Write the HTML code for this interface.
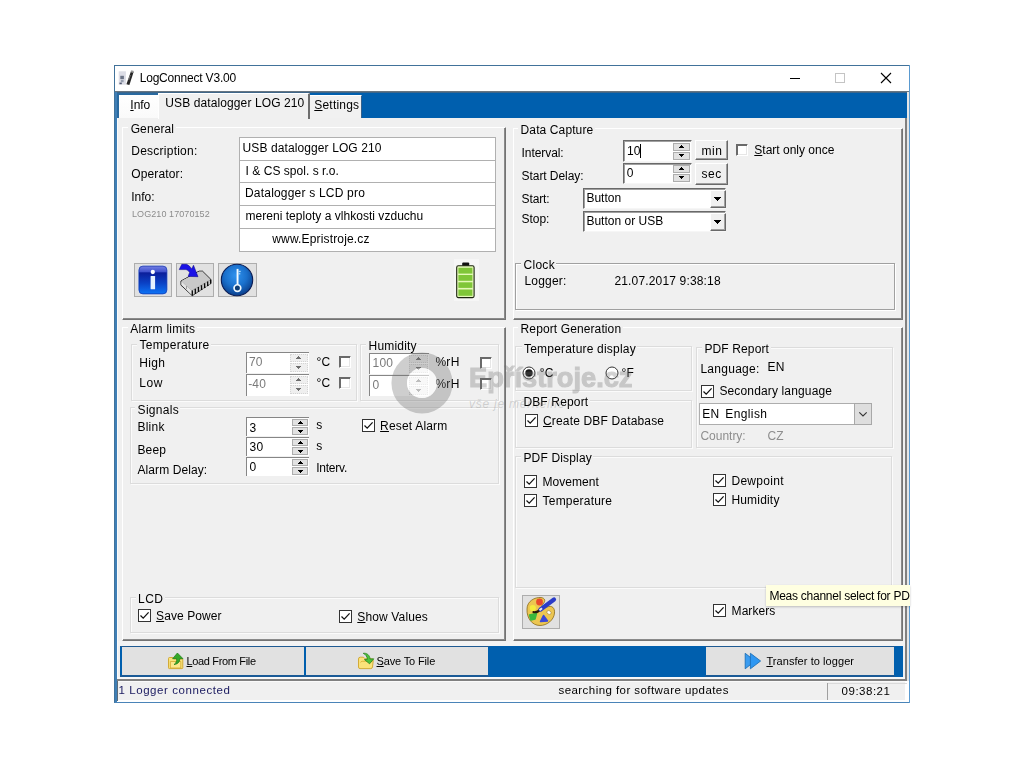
<!DOCTYPE html>
<html><head><meta charset="utf-8">
<style>
*{box-sizing:border-box;margin:0;padding:0}
html,body{width:1024px;height:768px;background:#fff;overflow:hidden}
body{font-family:"Liberation Sans",sans-serif;font-size:12px;color:#000;position:relative}
.a{position:absolute}
.t{position:absolute;white-space:nowrap;line-height:14px}
.panel{position:absolute;background:#f0f0f0;border-top:1px solid #fff;border-left:1px solid #fff;border-right:1px solid #737373;border-bottom:1px solid #737373;box-shadow:inset -1px -1px 0 #8a8a8a}
.gl{position:absolute;background:#f0f0f0;white-space:nowrap;line-height:14px;letter-spacing:0.15px}
.ed{position:absolute;background:#fff;border:1px solid #b0b0b0}
.sunk{position:absolute;background:#fff;border-top:1px solid #696969;border-left:1px solid #696969;border-right:1px solid #f6f6f6;border-bottom:1px solid #f6f6f6;box-shadow:inset 1px 1px 0 #a0a0a0}
.btn{position:absolute;background:#e1e1e1;border:1px solid #adadad}
.rbtn{position:absolute;background:#f0f0f0;border-top:1px solid #fff;border-left:1px solid #fff;border-right:1px solid #696969;border-bottom:1px solid #696969;box-shadow:inset -1px -1px 0 #a0a0a0}
.cb{position:absolute;width:13px;height:13px;background:#fff;border:1px solid #333}
.cbo{position:absolute;width:12px;height:12px;background:#fff;border-top:1px solid #696969;border-left:1px solid #696969;border-right:1px solid #fff;border-bottom:1px solid #fff;box-shadow:inset 1px 1px 0 #6a6a6a, inset -1px -1px 0 #e6e6e6}
u{text-decoration:underline;text-underline-offset:1px}
#root{position:absolute;left:0;top:0;width:1024px;height:768px}
.t{filter:grayscale(1)}
</style></head><body><div id="root">
<div class="a" style="left:114px;top:65px;width:796px;height:638px;border:1px solid #4a84b8;border-top-color:#41729a;border-left-color:#41729a;background:#fff"></div>
<div class="t" style="left:139.7px;top:71.04px;font-size:12px;line-height:14px;letter-spacing:-0.195px;">LogConnect V3.00</div>
<svg class="a" style="left:116px;top:68px" width="20" height="20" viewBox="116 68 20 20"><rect x="118.700" y="71.300" width="7.200" height="13.400" fill="#dcdde6"/><rect x="120.300" y="75.800" width="3.600" height="3.300" fill="#6c7486"/><rect x="120.800" y="79.800" width="2.800" height="2.400" fill="#98a0b0"/><rect x="119.500" y="82.600" width="2.300" height="1.600" fill="#505870"/><path d="M131 71.300 L133.600 72 L129.400 85 L126.400 84.200 Z" fill="#262626"/><path d="M131.300 70.300 L133.900 71 L133.300 73 L130.700 72.300 Z" fill="#9a9a9a"/><path d="M130.300 75 L128.700 80" stroke="#8a8a8a" stroke-width="0.800"/></svg>
<svg class="a" style="left:780px;top:66px" width="128" height="25" viewBox="0 0 128 25"><path d="M10 12.5 H20" stroke="#000" stroke-width="1"/><rect x="55.5" y="7.5" width="9" height="9" fill="none" stroke="#c4c4c4" stroke-width="1"/><path d="M101 7 L111 17 M111 7 L101 17" stroke="#000" stroke-width="1.1"/></svg>
<div class="a" style="left:115px;top:91px;width:794px;height:2px;background:linear-gradient(#7c7c7c,#2a5f8e)"></div>
<div class="a" style="left:115px;top:93px;width:792px;height:25px;background:#005fae"></div>
<div class="a" style="left:115px;top:93px;width:45px;height:25px;background:#2a6aa0"></div>
<div class="a" style="left:117px;top:117.5px;width:790px;height:1.0px;background:#fff"></div>
<div class="a" style="left:907px;top:92px;width:2px;height:589px;background:#e6e6e6"></div>
<div class="a" style="left:117px;top:118px;width:789px;height:562px;background:#f0f0f0"></div>
<div class="a" style="left:115px;top:92px;width:1.5px;height:610px;background:#3f7fb6"></div>
<div class="a" style="left:116.5px;top:118px;width:1.5px;height:561px;background:#fafafa"></div>
<div class="a" style="left:905px;top:118px;width:2px;height:563px;background:#808080"></div>
<div class="a" style="left:117px;top:679px;width:790px;height:2px;background:#808080"></div>
<div class="a" style="left:117px;top:677px;width:788px;height:2px;background:#f8f8f8"></div>
<div class="a" style="left:119px;top:95px;width:39px;height:23px;background:linear-gradient(#fff,#fafafa)"></div>
<div class="a" style="left:158px;top:93px;width:152px;height:26px;background:#f0f0f0;border-right:2px solid #6d6d6d;border-top:1px solid #fff;border-left:1px solid #fff"></div>
<div class="a" style="left:310px;top:95px;width:52px;height:23px;background:#f1f1f1;border-right:1px solid #35618c;border-top:1px solid #fff"></div>
<div class="t" style="left:130.3px;top:98.24px;font-size:12px;line-height:14px;letter-spacing:-0.008px;"><u>I</u>nfo</div>
<div class="t" style="left:165.3px;top:96.24px;font-size:12px;line-height:14px;letter-spacing:0.106px;">USB datalogger LOG 210</div>
<div class="t" style="left:314.3px;top:98.04px;font-size:12px;line-height:14px;letter-spacing:0.191px;"><u>S</u>ettings</div>
<div class="panel" style="left:122px;top:127px;width:384px;height:193px;"></div>
<div class="panel" style="left:513px;top:128px;width:390px;height:192px;"></div>
<div class="panel" style="left:122px;top:327px;width:384px;height:314px;"></div>
<div class="panel" style="left:513px;top:327px;width:390px;height:314px;"></div>
<div class="a" style="left:128.2px;top:122.69999999999999px;width:47.4px;height:12px;background:#f0f0f0"></div>
<div class="t" style="left:130.7px;top:121.54px;font-size:12px;line-height:14px;letter-spacing:0.100px;">General</div>
<div class="t" style="left:131.3px;top:144.04px;font-size:12px;line-height:14px;letter-spacing:0.237px;">Description:</div>
<div class="t" style="left:131.3px;top:166.84px;font-size:12px;line-height:14px;letter-spacing:0.122px;">Operator:</div>
<div class="t" style="left:131.3px;top:189.54px;font-size:12px;line-height:14px;letter-spacing:-0.012px;">Info:</div>
<div class="t" style="left:132px;top:206.58px;font-size:9px;line-height:14px;color:#8c8c8c;letter-spacing:0.081px;">LOG210 17070152</div>
<div class="ed" style="left:239px;top:137px;width:257px;height:24px;"></div>
<div class="ed" style="left:239px;top:160px;width:257px;height:23px;"></div>
<div class="ed" style="left:239px;top:182px;width:257px;height:24px;"></div>
<div class="ed" style="left:239px;top:205px;width:257px;height:24px;"></div>
<div class="ed" style="left:239px;top:228px;width:257px;height:24px;"></div>
<div class="t" style="left:242.5px;top:141.24px;font-size:12px;line-height:14px;letter-spacing:0.106px;">USB datalogger LOG 210</div>
<div class="t" style="left:245.6px;top:163.84px;font-size:12px;line-height:14px;letter-spacing:0.031px;">I &amp; CS spol. s r.o.</div>
<div class="t" style="left:245px;top:186.24px;font-size:12px;line-height:14px;letter-spacing:0.197px;">Datalogger s LCD pro</div>
<div class="t" style="left:245.5px;top:208.84px;font-size:12px;line-height:14px;letter-spacing:0.031px;">mereni teploty a vlhkosti vzduchu</div>
<div class="t" style="left:272.3px;top:232.24px;font-size:12px;line-height:14px;letter-spacing:0.154px;">www.Epristroje.cz</div>
<div class="btn" style="left:134px;top:263px;width:38px;height:34px;"></div>
<div class="btn" style="left:176px;top:263px;width:38px;height:34px;"></div>
<div class="btn" style="left:218px;top:263px;width:39px;height:34px;"></div>
<svg class="a" style="left:137px;top:264px" width="32" height="32" viewBox="137 264 32 32">
<defs><linearGradient id="gi" x1="0" y1="0" x2="0" y2="1"><stop offset="0" stop-color="#7480e4"/><stop offset="0.210" stop-color="#3e50cc"/><stop offset="0.240" stop-color="#0b1e9a"/><stop offset="0.600" stop-color="#0a40c4"/><stop offset="1" stop-color="#0d74f6"/></linearGradient></defs>
<rect x="138.200" y="265.400" width="29.400" height="29.200" rx="4.600" fill="#cfe0ff"/>
<rect x="138.900" y="266.100" width="28" height="27.800" rx="4" fill="url(#gi)" stroke="#1432a4" stroke-width="0.700"/>
<circle cx="152.800" cy="272" r="2.150" fill="#fff"/><rect x="150.600" y="275.900" width="4.500" height="13.300" rx="0.500" fill="#e6f2ff"/></svg>
<svg class="a" style="left:174px;top:260px" width="42" height="40" viewBox="0 0 42 40">
<path d="M7 21 L25 11.200 L28.500 11.200 L36.800 19.400 L36.800 23.600 L18.300 35.600 L7 25.200 Z" fill="#9a9a9a" stroke="#111" stroke-width="1"/>
<path d="M7.300 20.900 L25 11.400 L28.400 11.400 L36.400 19.400 L17.800 30.600 Z" fill="#c9c9c9"/>
<path d="M7.300 21.200 L17.800 30.800 L17.800 35 L7.300 25 Z" fill="#e4e4e4"/>
<path d="M12.500 26 L12.500 29" stroke="#888" stroke-width="0.800"/>
<path d="M18.300 30.500 V35.600 M21.300 28.800 V33.800 M24.400 27 V31.800 M27.500 25.200 V30 M30.600 23.300 V28 M33.700 21.500 V26 M36.600 19.800 V23.600" stroke="#0a0a0a" stroke-width="1.300"/>
<path d="M19.800 30 V34.500 M22.900 28.200 V32.600 M26 26.300 V30.800 M29.100 24.500 V29 M32.200 22.600 V27 M35.200 20.800 V24.800" stroke="#e8e8e8" stroke-width="1"/>
<path d="M5.200 9.600 L7.800 4.300 L12.500 4.300 C14.500 5 16.500 7 17.700 8.900 L19.500 5.200 L24 16.700 L14.100 16.400 L15.600 12.500 C14.500 10.800 13.500 10 12 9.600 Z" fill="#1a12e6" stroke="#080480" stroke-width="0.500" stroke-linejoin="round"/>
</svg>
<svg class="a" style="left:219px;top:262px" width="36" height="36" viewBox="219 262 36 36">
<defs><radialGradient id="gk" cx="0.460" cy="0.360" r="0.640"><stop offset="0" stop-color="#2f92ee"/><stop offset="0.550" stop-color="#1a70cc"/><stop offset="1" stop-color="#0b3f8c"/></radialGradient></defs>
<circle cx="237" cy="280" r="15.700" fill="url(#gk)" stroke="#0a1c54" stroke-width="1.100"/>
<rect x="236.600" y="268.900" width="1.900" height="16" fill="#f4fbff"/>
<rect x="238.400" y="270.800" width="2.300" height="1.300" fill="#a8d6fa"/>
<rect x="238.400" y="273.200" width="1.900" height="1.200" fill="#a8d6fa"/>
<circle cx="237.400" cy="288.100" r="3.350" fill="#0d3c74" stroke="#f0f9ff" stroke-width="1.700"/>
</svg>
<svg class="a" style="left:454px;top:259px" width="25" height="42" viewBox="0 0 25 42">
<rect x="0" y="0" width="25" height="42" fill="#f6f6f6"/>
<rect x="8.2" y="3.6" width="7" height="3.6" rx="1" fill="#111"/>
<rect x="2.700" y="6.800" width="17.400" height="31.800" rx="1.600" fill="#e4f9b8" stroke="#1c2410" stroke-width="1.100"/>
<rect x="4.400" y="8.800" width="14" height="5.800" fill="#7fc638"/>
<rect x="4.400" y="16" width="14" height="5.800" fill="#7fc638"/>
<rect x="4.400" y="23.300" width="14" height="5.600" fill="#7fc638"/>
<rect x="4.400" y="30.500" width="14" height="6.300" fill="#7fc638"/>
</svg>
<div class="a" style="left:518.1px;top:124.6px;width:76.7px;height:12px;background:#f0f0f0"></div>
<div class="t" style="left:520.6px;top:123.44px;font-size:12px;line-height:14px;letter-spacing:0.110px;">Data Capture</div>
<div class="t" style="left:521.6px;top:146.24px;font-size:12px;line-height:14px;letter-spacing:-0.076px;">Interval:</div>
<div class="t" style="left:521.6px;top:169.24px;font-size:12px;line-height:14px;letter-spacing:-0.067px;">Start Delay:</div>
<div class="t" style="left:521.6px;top:192.04px;font-size:12px;line-height:14px;letter-spacing:-0.148px;">Start:</div>
<div class="t" style="left:521.6px;top:211.84px;font-size:12px;line-height:14px;letter-spacing:-0.046px;">Stop:</div>
<div class="sunk" style="left:623px;top:140px;width:69px;height:22px;"></div>
<div class="t" style="left:627px;top:143.84px;font-size:12px;line-height:14px;color:#000;letter-spacing:0.15px;">10</div>
<div class="a" style="left:673px;top:142.5px;width:17px;height:8.0px;background:#e1e1e1;border:1px solid #adadad"></div>
<div class="a" style="left:681px;top:145px;width:1px;height:1px;background:#000"></div>
<div class="a" style="left:680px;top:146px;width:3px;height:1px;background:#000"></div>
<div class="a" style="left:679px;top:147px;width:5px;height:1px;background:#000"></div>
<div class="a" style="left:673px;top:152px;width:17px;height:8px;background:#e1e1e1;border:1px solid #adadad"></div>
<div class="a" style="left:679px;top:154px;width:5px;height:1px;background:#000"></div>
<div class="a" style="left:680px;top:155px;width:3px;height:1px;background:#000"></div>
<div class="a" style="left:681px;top:156px;width:1px;height:1px;background:#000"></div>
<div class="a" style="left:640px;top:143.5px;width:1px;height:14.0px;background:#000"></div>
<div class="sunk" style="left:623px;top:163px;width:69px;height:21px;"></div>
<div class="t" style="left:626.8px;top:166.04px;font-size:12px;line-height:14px;color:#000;letter-spacing:0.15px;">0</div>
<div class="a" style="left:673px;top:165px;width:17px;height:7.5px;background:#e1e1e1;border:1px solid #adadad"></div>
<div class="a" style="left:681px;top:167px;width:1px;height:1px;background:#000"></div>
<div class="a" style="left:680px;top:168px;width:3px;height:1px;background:#000"></div>
<div class="a" style="left:679px;top:169px;width:5px;height:1px;background:#000"></div>
<div class="a" style="left:673px;top:174px;width:17px;height:8px;background:#e1e1e1;border:1px solid #adadad"></div>
<div class="a" style="left:679px;top:176px;width:5px;height:1px;background:#000"></div>
<div class="a" style="left:680px;top:177px;width:3px;height:1px;background:#000"></div>
<div class="a" style="left:681px;top:178px;width:1px;height:1px;background:#000"></div>
<div class="rbtn" style="left:695px;top:140px;width:33px;height:20px;"></div>
<div class="rbtn" style="left:695px;top:163px;width:33px;height:22px;"></div>
<div class="t" style="left:701.6px;top:143.54px;font-size:12px;line-height:14px;letter-spacing:0.519px;">min</div>
<div class="t" style="left:701.4px;top:166.54px;font-size:12px;line-height:14px;letter-spacing:0.604px;">sec</div>
<div class="cbo" style="left:736px;top:143.5px"></div>
<div class="t" style="left:754.3px;top:143.04px;font-size:12px;line-height:14px;letter-spacing:0.002px;"><u>S</u>tart only once</div>
<div class="sunk" style="left:583px;top:187.5px;width:143px;height:21.5px;"></div>
<div class="t" style="left:586.4px;top:191.04px;font-size:12px;line-height:14px;letter-spacing:0.016px;">Button</div>
<div class="rbtn" style="left:709.5px;top:189.5px;width:16.5px;height:18.0px;"></div>
<div class="a" style="left:714px;top:197px;width:7px;height:1px;background:#000"></div>
<div class="a" style="left:715px;top:198px;width:5px;height:1px;background:#000"></div>
<div class="a" style="left:716px;top:199px;width:3px;height:1px;background:#000"></div>
<div class="a" style="left:717px;top:200px;width:1px;height:1px;background:#000"></div>
<div class="sunk" style="left:583px;top:210.5px;width:143px;height:21.5px;"></div>
<div class="t" style="left:586.4px;top:213.84px;font-size:12px;line-height:14px;letter-spacing:0.006px;">Button or USB</div>
<div class="rbtn" style="left:709.5px;top:212.5px;width:16.5px;height:18.0px;"></div>
<div class="a" style="left:714px;top:220px;width:7px;height:1px;background:#000"></div>
<div class="a" style="left:715px;top:221px;width:5px;height:1px;background:#000"></div>
<div class="a" style="left:716px;top:222px;width:3px;height:1px;background:#000"></div>
<div class="a" style="left:717px;top:223px;width:1px;height:1px;background:#000"></div>
<div class="a" style="left:515px;top:263px;width:380px;height:47px;border:1px solid #a0a0a0;box-shadow:1px 1px 0 #fff, inset 1px 1px 0 #fff"></div>
<div class="a" style="left:521.1px;top:258.9px;width:35.3px;height:12px;background:#f0f0f0"></div>
<div class="t" style="left:523.6px;top:257.74px;font-size:12px;line-height:14px;letter-spacing:0.257px;">Clock</div>
<div class="t" style="left:524.5px;top:273.74px;font-size:12px;line-height:14px;letter-spacing:0.185px;">Logger:</div>
<div class="t" style="left:614.4px;top:273.74px;font-size:12px;line-height:14px;letter-spacing:0.165px;">21.07.2017 9:38:18</div>
<div class="a" style="left:127.69999999999999px;top:322.7px;width:69.1px;height:12px;background:#f0f0f0"></div>
<div class="t" style="left:130.2px;top:321.54px;font-size:12px;line-height:14px;letter-spacing:0.258px;">Alarm limits</div>
<div class="a" style="left:130.5px;top:343.5px;width:226.0px;height:57.0px;border:1px solid #dcdcdc;box-shadow:1px 1px 0 #fbfbfb, inset 1px 1px 0 #fbfbfb"></div>
<div class="a" style="left:137.0px;top:338.7px;width:73.9px;height:12px;background:#f0f0f0"></div>
<div class="t" style="left:139.5px;top:337.54px;font-size:12px;line-height:14px;letter-spacing:0.230px;">Temperature</div>
<div class="a" style="left:360px;top:343.5px;width:139px;height:57.5px;border:1px solid #dcdcdc;box-shadow:1px 1px 0 #fbfbfb, inset 1px 1px 0 #fbfbfb"></div>
<div class="a" style="left:366.1px;top:339.9px;width:52.1px;height:12px;background:#f0f0f0"></div>
<div class="t" style="left:368.6px;top:338.74px;font-size:12px;line-height:14px;letter-spacing:0.177px;">Humidity</div>
<div class="t" style="left:139.3px;top:355.74px;font-size:12px;line-height:14px;letter-spacing:0.328px;">High</div>
<div class="t" style="left:139.3px;top:375.64px;font-size:12px;line-height:14px;letter-spacing:0.495px;">Low</div>
<div class="a" style="left:246px;top:352px;width:63px;height:21px;background:#fff;border-top:1px solid #868686;border-left:1px solid #868686"></div>
<div class="t" style="left:249px;top:355.14px;font-size:12px;line-height:14px;color:#7a7a7a;letter-spacing:0.15px;">70</div>
<div class="a" style="left:290px;top:353.5px;width:18px;height:8.5px;background:#efefef;border:1px solid #d4d4d4;border-style:dotted"></div>
<div class="a" style="left:298px;top:356px;width:1px;height:1px;background:#6d6d6d"></div>
<div class="a" style="left:297px;top:357px;width:3px;height:1px;background:#6d6d6d"></div>
<div class="a" style="left:296px;top:358px;width:5px;height:1px;background:#6d6d6d"></div>
<div class="a" style="left:290px;top:363px;width:18px;height:9px;background:#efefef;border:1px solid #d4d4d4;border-style:dotted"></div>
<div class="a" style="left:296px;top:366px;width:5px;height:1px;background:#6d6d6d"></div>
<div class="a" style="left:297px;top:367px;width:3px;height:1px;background:#6d6d6d"></div>
<div class="a" style="left:298px;top:368px;width:1px;height:1px;background:#6d6d6d"></div>
<div class="a" style="left:246px;top:374px;width:63px;height:21.5px;background:#fff;border-top:1px solid #868686;border-left:1px solid #868686"></div>
<div class="t" style="left:248.2px;top:376.64px;font-size:12px;line-height:14px;color:#7a7a7a;letter-spacing:0.15px;">-40</div>
<div class="a" style="left:290px;top:375.5px;width:18px;height:8.5px;background:#efefef;border:1px solid #d4d4d4;border-style:dotted"></div>
<div class="a" style="left:298px;top:378px;width:1px;height:1px;background:#6d6d6d"></div>
<div class="a" style="left:297px;top:379px;width:3px;height:1px;background:#6d6d6d"></div>
<div class="a" style="left:296px;top:380px;width:5px;height:1px;background:#6d6d6d"></div>
<div class="a" style="left:290px;top:385px;width:18px;height:9px;background:#efefef;border:1px solid #d4d4d4;border-style:dotted"></div>
<div class="a" style="left:296px;top:388px;width:5px;height:1px;background:#6d6d6d"></div>
<div class="a" style="left:297px;top:389px;width:3px;height:1px;background:#6d6d6d"></div>
<div class="a" style="left:298px;top:390px;width:1px;height:1px;background:#6d6d6d"></div>
<div class="t" style="left:316.6px;top:355.34px;font-size:12px;line-height:14px;letter-spacing:0.15px;">°C</div>
<div class="t" style="left:316.6px;top:375.64px;font-size:12px;line-height:14px;letter-spacing:0.15px;">°C</div>
<div class="cbo" style="left:339.4px;top:356px"></div>
<div class="cbo" style="left:339.4px;top:377px"></div>
<div class="a" style="left:369px;top:353px;width:59.5px;height:20.5px;background:#fff;border-top:1px solid #868686;border-left:1px solid #868686"></div>
<div class="t" style="left:372.6px;top:355.74px;font-size:12px;line-height:14px;color:#7a7a7a;letter-spacing:0.15px;">100</div>
<div class="a" style="left:409px;top:354.5px;width:18.5px;height:8.5px;background:#efefef;border:1px solid #d4d4d4;border-style:dotted"></div>
<div class="a" style="left:418px;top:357px;width:1px;height:1px;background:#6d6d6d"></div>
<div class="a" style="left:417px;top:358px;width:3px;height:1px;background:#6d6d6d"></div>
<div class="a" style="left:416px;top:359px;width:5px;height:1px;background:#6d6d6d"></div>
<div class="a" style="left:409px;top:364px;width:18.5px;height:8.5px;background:#efefef;border:1px solid #d4d4d4;border-style:dotted"></div>
<div class="a" style="left:416px;top:367px;width:5px;height:1px;background:#6d6d6d"></div>
<div class="a" style="left:417px;top:368px;width:3px;height:1px;background:#6d6d6d"></div>
<div class="a" style="left:418px;top:369px;width:1px;height:1px;background:#6d6d6d"></div>
<div class="a" style="left:369px;top:375px;width:59.5px;height:20.5px;background:#fff;border-top:1px solid #868686;border-left:1px solid #868686"></div>
<div class="t" style="left:372.6px;top:377.84px;font-size:12px;line-height:14px;color:#7a7a7a;letter-spacing:0.15px;">0</div>
<div class="a" style="left:409px;top:376.5px;width:18.5px;height:8.5px;background:#efefef;border:1px solid #d4d4d4;border-style:dotted"></div>
<div class="a" style="left:418px;top:379px;width:1px;height:1px;background:#6d6d6d"></div>
<div class="a" style="left:417px;top:380px;width:3px;height:1px;background:#6d6d6d"></div>
<div class="a" style="left:416px;top:381px;width:5px;height:1px;background:#6d6d6d"></div>
<div class="a" style="left:409px;top:386px;width:18.5px;height:8.5px;background:#efefef;border:1px solid #d4d4d4;border-style:dotted"></div>
<div class="a" style="left:416px;top:389px;width:5px;height:1px;background:#6d6d6d"></div>
<div class="a" style="left:417px;top:390px;width:3px;height:1px;background:#6d6d6d"></div>
<div class="a" style="left:418px;top:391px;width:1px;height:1px;background:#6d6d6d"></div>
<div class="t" style="left:435.4px;top:354.84px;font-size:12px;line-height:14px;letter-spacing:0.285px;">%rH</div>
<div class="t" style="left:435.4px;top:377.44px;font-size:12px;line-height:14px;letter-spacing:0.285px;">%rH</div>
<div class="cbo" style="left:480.4px;top:357px"></div>
<div class="cbo" style="left:480.4px;top:378.2px"></div>
<div class="a" style="left:129.8px;top:407px;width:369.2px;height:77px;border:1px solid #dcdcdc;box-shadow:1px 1px 0 #fbfbfb, inset 1px 1px 0 #fbfbfb"></div>
<div class="a" style="left:135.1px;top:403.75px;width:45.4px;height:12px;background:#f0f0f0"></div>
<div class="t" style="left:137.6px;top:402.59px;font-size:12px;line-height:14px;letter-spacing:0.292px;">Signals</div>
<div class="t" style="left:137.4px;top:419.54px;font-size:12px;line-height:14px;letter-spacing:0.277px;">Blink</div>
<div class="t" style="left:137.4px;top:442.64px;font-size:12px;line-height:14px;letter-spacing:0.167px;">Beep</div>
<div class="t" style="left:137.4px;top:463.34px;font-size:12px;line-height:14px;letter-spacing:0.101px;">Alarm Delay:</div>
<div class="a" style="left:246px;top:417px;width:63px;height:19px;background:#fff;border-top:1px solid #868686;border-left:1px solid #868686"></div>
<div class="t" style="left:249.6px;top:420.54px;font-size:12px;line-height:14px;color:#000;letter-spacing:0.15px;">3</div>
<div class="a" style="left:292px;top:418.5px;width:16px;height:7.5px;background:#e1e1e1;border:1px solid #adadad"></div>
<div class="a" style="left:300px;top:421px;width:1px;height:1px;background:#000"></div>
<div class="a" style="left:299px;top:422px;width:3px;height:1px;background:#000"></div>
<div class="a" style="left:298px;top:423px;width:5px;height:1px;background:#000"></div>
<div class="a" style="left:292px;top:427px;width:16px;height:8px;background:#e1e1e1;border:1px solid #adadad"></div>
<div class="a" style="left:298px;top:430px;width:5px;height:1px;background:#000"></div>
<div class="a" style="left:299px;top:431px;width:3px;height:1px;background:#000"></div>
<div class="a" style="left:300px;top:432px;width:1px;height:1px;background:#000"></div>
<div class="a" style="left:246px;top:437px;width:63px;height:19px;background:#fff;border-top:1px solid #868686;border-left:1px solid #868686"></div>
<div class="t" style="left:249.6px;top:440.44px;font-size:12px;line-height:14px;color:#000;letter-spacing:0.15px;">30</div>
<div class="a" style="left:292px;top:438.5px;width:16px;height:7.5px;background:#e1e1e1;border:1px solid #adadad"></div>
<div class="a" style="left:300px;top:441px;width:1px;height:1px;background:#000"></div>
<div class="a" style="left:299px;top:442px;width:3px;height:1px;background:#000"></div>
<div class="a" style="left:298px;top:443px;width:5px;height:1px;background:#000"></div>
<div class="a" style="left:292px;top:447px;width:16px;height:8px;background:#e1e1e1;border:1px solid #adadad"></div>
<div class="a" style="left:298px;top:450px;width:5px;height:1px;background:#000"></div>
<div class="a" style="left:299px;top:451px;width:3px;height:1px;background:#000"></div>
<div class="a" style="left:300px;top:452px;width:1px;height:1px;background:#000"></div>
<div class="a" style="left:246px;top:457px;width:63px;height:19px;background:#fff;border-top:1px solid #868686;border-left:1px solid #868686"></div>
<div class="t" style="left:249.6px;top:460.34px;font-size:12px;line-height:14px;color:#000;letter-spacing:0.15px;">0</div>
<div class="a" style="left:292px;top:458.5px;width:16px;height:7.5px;background:#e1e1e1;border:1px solid #adadad"></div>
<div class="a" style="left:300px;top:461px;width:1px;height:1px;background:#000"></div>
<div class="a" style="left:299px;top:462px;width:3px;height:1px;background:#000"></div>
<div class="a" style="left:298px;top:463px;width:5px;height:1px;background:#000"></div>
<div class="a" style="left:292px;top:467px;width:16px;height:8px;background:#e1e1e1;border:1px solid #adadad"></div>
<div class="a" style="left:298px;top:470px;width:5px;height:1px;background:#000"></div>
<div class="a" style="left:299px;top:471px;width:3px;height:1px;background:#000"></div>
<div class="a" style="left:300px;top:472px;width:1px;height:1px;background:#000"></div>
<div class="t" style="left:316.2px;top:418.34px;font-size:12px;line-height:14px;letter-spacing:0.15px;">s</div>
<div class="t" style="left:316.2px;top:439.44px;font-size:12px;line-height:14px;letter-spacing:0.15px;">s</div>
<div class="t" style="left:316.2px;top:460.54px;font-size:12px;line-height:14px;letter-spacing:-0.224px;">Interv.</div>
<div class="cb" style="left:362px;top:419px"><svg width="13" height="13" viewBox="0 0 13 13" style="position:absolute;left:-1px;top:-1px"><path d="M2.5 6.5 L5.2 9.2 L10.6 3.4" fill="none" stroke="#111" stroke-width="1.25"/></svg></div>
<div class="t" style="left:380.1px;top:418.84px;font-size:12px;line-height:14px;letter-spacing:0.184px;"><u>R</u>eset Alarm</div>
<div class="a" style="left:130px;top:597px;width:369px;height:36px;border:1px solid #dcdcdc;box-shadow:1px 1px 0 #fbfbfb, inset 1px 1px 0 #fbfbfb"></div>
<div class="a" style="left:135.6px;top:593.4px;width:29.2px;height:12px;background:#f0f0f0"></div>
<div class="t" style="left:138.1px;top:592.24px;font-size:12px;line-height:14px;letter-spacing:0.395px;">LCD</div>
<div class="cb" style="left:138px;top:609px"><svg width="13" height="13" viewBox="0 0 13 13" style="position:absolute;left:-1px;top:-1px"><path d="M2.5 6.5 L5.2 9.2 L10.6 3.4" fill="none" stroke="#111" stroke-width="1.25"/></svg></div>
<div class="t" style="left:156.1px;top:608.64px;font-size:12px;line-height:14px;letter-spacing:0.088px;"><u>S</u>ave Power</div>
<div class="cb" style="left:339px;top:610px"><svg width="13" height="13" viewBox="0 0 13 13" style="position:absolute;left:-1px;top:-1px"><path d="M2.5 6.5 L5.2 9.2 L10.6 3.4" fill="none" stroke="#111" stroke-width="1.25"/></svg></div>
<div class="t" style="left:357.3px;top:609.54px;font-size:12px;line-height:14px;letter-spacing:0.139px;"><u>S</u>how Values</div>
<div class="a" style="left:518.1px;top:322.8px;width:104.6px;height:12px;background:#f0f0f0"></div>
<div class="t" style="left:520.6px;top:321.64px;font-size:12px;line-height:14px;letter-spacing:0.110px;">Report Generation</div>
<div class="a" style="left:515px;top:346.4px;width:176.5px;height:44.60000000000002px;border:1px solid #dcdcdc;box-shadow:1px 1px 0 #fbfbfb, inset 1px 1px 0 #fbfbfb"></div>
<div class="a" style="left:521.5px;top:342.7px;width:115.9px;height:12px;background:#f0f0f0"></div>
<div class="t" style="left:524px;top:341.54px;font-size:12px;line-height:14px;letter-spacing:0.202px;">Temperature display</div>
<svg class="a" style="left:522px;top:366px" width="14" height="14"><circle cx="7" cy="7" r="6" fill="#fff" stroke="#333" stroke-width="1"/><circle cx="7" cy="7" r="3.7" fill="#1a1a1a"/></svg>
<svg class="a" style="left:604.5px;top:366px" width="14" height="14"><circle cx="7" cy="7" r="6" fill="#fff" stroke="#333" stroke-width="1"/></svg>
<div class="t" style="left:539.8px;top:365.64px;font-size:12px;line-height:14px;letter-spacing:0.15px;">°C</div>
<div class="t" style="left:621.6px;top:365.64px;font-size:12px;line-height:14px;letter-spacing:0.15px;">°F</div>
<div class="a" style="left:515px;top:399.5px;width:176.5px;height:48.5px;border:1px solid #dcdcdc;box-shadow:1px 1px 0 #fbfbfb, inset 1px 1px 0 #fbfbfb"></div>
<div class="a" style="left:520.9px;top:396.1px;width:68.9px;height:12px;background:#f0f0f0"></div>
<div class="t" style="left:523.4px;top:394.94px;font-size:12px;line-height:14px;letter-spacing:0.154px;">DBF Report</div>
<div class="cb" style="left:525px;top:414px"><svg width="13" height="13" viewBox="0 0 13 13" style="position:absolute;left:-1px;top:-1px"><path d="M2.5 6.5 L5.2 9.2 L10.6 3.4" fill="none" stroke="#111" stroke-width="1.25"/></svg></div>
<div class="t" style="left:543px;top:413.74px;font-size:12px;line-height:14px;letter-spacing:0.165px;"><u>C</u>reate DBF Database</div>
<div class="a" style="left:696px;top:346.5px;width:196.5px;height:101.5px;border:1px solid #dcdcdc;box-shadow:1px 1px 0 #fbfbfb, inset 1px 1px 0 #fbfbfb"></div>
<div class="a" style="left:701.9px;top:342.75px;width:68.7px;height:12px;background:#f0f0f0"></div>
<div class="t" style="left:704.4px;top:341.59px;font-size:12px;line-height:14px;letter-spacing:0.134px;">PDF Report</div>
<div class="t" style="left:700.4px;top:361.54px;font-size:12px;line-height:14px;letter-spacing:0.274px;">Language:</div>
<div class="t" style="left:767.5px;top:359.74px;font-size:12px;line-height:14px;letter-spacing:0.264px;">EN</div>
<div class="cb" style="left:701px;top:384.5px"><svg width="13" height="13" viewBox="0 0 13 13" style="position:absolute;left:-1px;top:-1px"><path d="M2.5 6.5 L5.2 9.2 L10.6 3.4" fill="none" stroke="#111" stroke-width="1.25"/></svg></div>
<div class="t" style="left:719.4px;top:383.64px;font-size:12px;line-height:14px;letter-spacing:0.145px;">Secondary language</div>
<div class="a" style="left:699px;top:403px;width:173px;height:22px;background:#fff;border:1px solid #adadad"></div>
<div class="a" style="left:854px;top:403px;width:18px;height:22px;background:#dedede;border:1px solid #a8a8a8"></div>
<svg class="a" style="left:857px;top:409.5px" width="12" height="9"><path d="M2.300 2.300 L6 6 L9.700 2.300" fill="none" stroke="#333" stroke-width="1.100"/></svg>
<div class="t" style="left:702.2px;top:406.84px;font-size:12px;line-height:14px;letter-spacing:0.390px;word-spacing:-0.9px;">EN&nbsp; English</div>
<div class="t" style="left:700.4px;top:429.04px;font-size:12px;line-height:14px;color:#8e8e8e;letter-spacing:-0.007px;">Country:</div>
<div class="t" style="left:767.5px;top:429.04px;font-size:12px;line-height:14px;color:#8e8e8e;letter-spacing:0.000px;">CZ</div>
<div class="a" style="left:515px;top:456.3px;width:376.5px;height:131.7px;border:1px solid #dcdcdc;box-shadow:1px 1px 0 #fbfbfb, inset 1px 1px 0 #fbfbfb"></div>
<div class="a" style="left:520.9px;top:452.5px;width:72.5px;height:12px;background:#f0f0f0"></div>
<div class="t" style="left:523.4px;top:451.34px;font-size:12px;line-height:14px;letter-spacing:0.165px;">PDF Display</div>
<div class="cb" style="left:524px;top:475px"><svg width="13" height="13" viewBox="0 0 13 13" style="position:absolute;left:-1px;top:-1px"><path d="M2.5 6.5 L5.2 9.2 L10.6 3.4" fill="none" stroke="#111" stroke-width="1.25"/></svg></div>
<div class="t" style="left:542.6px;top:474.64px;font-size:12px;line-height:14px;letter-spacing:0.034px;">Movement</div>
<div class="cb" style="left:524px;top:494px"><svg width="13" height="13" viewBox="0 0 13 13" style="position:absolute;left:-1px;top:-1px"><path d="M2.5 6.5 L5.2 9.2 L10.6 3.4" fill="none" stroke="#111" stroke-width="1.25"/></svg></div>
<div class="t" style="left:542.6px;top:493.84px;font-size:12px;line-height:14px;letter-spacing:0.202px;">Temperature</div>
<div class="cb" style="left:713px;top:474px"><svg width="13" height="13" viewBox="0 0 13 13" style="position:absolute;left:-1px;top:-1px"><path d="M2.5 6.5 L5.2 9.2 L10.6 3.4" fill="none" stroke="#111" stroke-width="1.25"/></svg></div>
<div class="t" style="left:731.4px;top:473.74px;font-size:12px;line-height:14px;letter-spacing:0.321px;">Dewpoint</div>
<div class="cb" style="left:713px;top:493px"><svg width="13" height="13" viewBox="0 0 13 13" style="position:absolute;left:-1px;top:-1px"><path d="M2.5 6.5 L5.2 9.2 L10.6 3.4" fill="none" stroke="#111" stroke-width="1.25"/></svg></div>
<div class="t" style="left:731.4px;top:492.54px;font-size:12px;line-height:14px;letter-spacing:0.189px;">Humidity</div>
<div class="cb" style="left:713px;top:604px"><svg width="13" height="13" viewBox="0 0 13 13" style="position:absolute;left:-1px;top:-1px"><path d="M2.5 6.5 L5.2 9.2 L10.6 3.4" fill="none" stroke="#111" stroke-width="1.25"/></svg></div>
<div class="t" style="left:731.6px;top:603.84px;font-size:12px;line-height:14px;letter-spacing:0.051px;">Markers</div>
<div class="btn" style="left:522px;top:595px;width:38px;height:34px;"></div>
<svg class="a" style="left:523px;top:596px" width="36" height="32" viewBox="0 0 36 32">
<path d="M4 13 C4 5 12 1 18 1.5 C22 2 23 5 20 8 C17 11 20 13 24 11 C29 9 32 12 31.5 17 C31 24 24 29.5 17 29.5 C9 29.500 3.500 22 4 13 Z" fill="#ecc651" stroke="#8a6a1c" stroke-width="0.8"/>
<circle cx="16.500" cy="6" r="3.400" fill="#e84a2c"/>
<circle cx="9.800" cy="12" r="3.100" fill="#f4ec3c"/>
<path d="M6.500 19 L13.500 17.500 L12 23 L8 24 Z" fill="#3cb83c" stroke="#3cb83c" stroke-width="1.500" stroke-linejoin="round"/>
<path d="M17.500 25.500 L20.500 19.500 L24.500 25 Z" fill="#3a48d8" stroke="#3a48d8" stroke-width="1.500" stroke-linejoin="round"/>
<ellipse cx="26" cy="16.500" rx="2.300" ry="1.700" fill="#fff" stroke="#a08030" stroke-width="0.600" transform="rotate(30 26 16.500)"/>
<path d="M10.500 16.200 C13 16.500 15.500 15.500 17 13.500" stroke="#2a1a08" stroke-width="2.200" fill="none" stroke-linecap="round"/>
<path d="M17.500 13.500 L31 3.500" stroke="#2a3cc8" stroke-width="4.200" stroke-linecap="round"/>
<path d="M16.500 14.300 L19 12.300" stroke="#e8e8f0" stroke-width="2"/>
</svg>
<svg class="a" style="left:385px;top:345px" width="270" height="80" viewBox="385 345 270 80">
<circle cx="422" cy="383" r="22.800" fill="none" stroke="rgba(110,110,110,0.340)" stroke-width="15.500"/>
<circle cx="422" cy="383" r="15" fill="rgba(255,255,255,0.550)"/>
<g opacity="0.310"><text x="469" y="387" font-family="Liberation Sans, sans-serif" font-weight="bold" font-size="27" fill="#6e6e6e" stroke="#6e6e6e" stroke-width="1.100" textLength="163.500" lengthAdjust="spacingAndGlyphs">Epřístroje.cz</text></g>
<text x="469" y="408.400" font-family="Liberation Sans, sans-serif" font-style="italic" font-size="12" fill="rgba(120,120,120,0.280)" textLength="95.500" lengthAdjust="spacing">vše je měřitelné</text>
</svg>
<div class="a" style="left:120px;top:645.5px;width:783px;height:31.5px;background:#005fae"></div>
<div class="a" style="left:118px;top:641px;width:787px;height:4.5px;background:#f3f3f3"></div>
<div class="a" style="left:120px;top:645.5px;width:369px;height:1.5px;background:#1f5a92"></div>
<div class="a" style="left:705px;top:645.5px;width:190px;height:1.5px;background:#1f5a92"></div>
<div class="a" style="left:120px;top:675px;width:369px;height:2px;background:#1a5a96"></div>
<div class="a" style="left:705px;top:675px;width:190px;height:2px;background:#1a5a96"></div>
<div class="a" style="left:122px;top:647px;width:182px;height:28px;background:#e1e1e1"></div>
<div class="a" style="left:306px;top:647px;width:182px;height:28px;background:#e1e1e1"></div>
<div class="a" style="left:706px;top:647px;width:188px;height:28px;background:#e1e1e1"></div>
<div class="t" style="left:186.5px;top:654.19px;font-size:11px;line-height:14px;letter-spacing:-0.342px;"><u>L</u>oad From File</div>
<div class="t" style="left:376.5px;top:654.19px;font-size:11px;line-height:14px;letter-spacing:-0.145px;"><u>S</u>ave To File</div>
<div class="t" style="left:766.4px;top:654.49px;font-size:11px;line-height:14px;letter-spacing:0.071px;"><u>T</u>ransfer to logger</div>
<svg class="a" style="left:167px;top:652px" width="18" height="18" viewBox="0 0 18 18">
<path d="M1.500 6.500 Q1.500 5.500 2.500 5.500 L6 5.500 L7 6.800 L15 6.800 Q15.800 6.800 15.800 7.600 L15.800 15.800 Q15.800 16.600 15 16.600 L2.300 16.600 Q1.500 16.600 1.500 15.800 Z" fill="#f9e27a" stroke="#cfa52a" stroke-width="0.9"/>
<path d="M3.400 9.500 L13.800 9.500 L13.800 16 L3.400 16 Z" fill="#fbe98c" stroke="#d3aa30" stroke-width="0.800"/>
<path d="M10.400 1 L16 6.700 L12.800 6.700 C12.800 10 11 12 7 12.600 C9.300 11 9.800 9 9.600 6.700 L5.600 6.700 Z" fill="#34a828" stroke="#1c7a14" stroke-width="0.700" stroke-linejoin="round"/>
</svg>
<svg class="a" style="left:357px;top:652px" width="18" height="18" viewBox="0 0 18 18">
<path d="M1.500 7 Q1.500 5.200 3.300 5.200 L6.500 5.200 L8 6.800 L14.800 6.800 Q16.300 6.800 16.300 8.300 L15.500 15 Q15.300 16.600 13.800 16.600 L3 16.600 Q1.500 16.600 1.500 15 Z" fill="#fbe27a" stroke="#cfa52a" stroke-width="0.900"/>
<path d="M3.600 10.500 Q4 9.300 5.200 9.300 L15.600 9.300" fill="none" stroke="#d3aa30" stroke-width="0.800"/>
<path d="M6.200 1.300 C10 0.800 12.500 3 13.200 7 L16.800 6.800 L12.600 11.800 L7.400 7.600 L10.400 7.300 C10 4.500 8.800 2.500 6.200 1.300 Z" fill="#4cc23c" stroke="#1c7a14" stroke-width="0.700" stroke-linejoin="round"/>
</svg>
<svg class="a" style="left:744px;top:652px" width="18" height="18" viewBox="0 0 18 18">
<path d="M1.200 1.300 L11 9 L1.200 16.800 Z" fill="#3a9cf0" stroke="#1d6fb8" stroke-width="0.900" stroke-linejoin="round"/>
<path d="M6.400 1.300 L16.600 9 L6.400 16.800 Z" fill="#2e97f2" stroke="#1d6fb8" stroke-width="0.900" stroke-linejoin="round"/>
</svg>
<div class="a" style="left:117px;top:681px;width:788px;height:19px;background:#f0f0f0"></div>
<div class="a" style="left:116.5px;top:681px;width:792.5px;height:1px;background:#fafafa"></div>
<div class="a" style="left:116.6px;top:681px;width:1.0px;height:19.5px;background:#5d6b78"></div>
<div class="a" style="left:905px;top:681px;width:4px;height:21px;background:#fff"></div>
<div class="t" style="left:118.5px;top:683.42px;font-size:11.5px;line-height:14px;color:#1b1b60;letter-spacing:0.568px;filter:saturate(1.001);">1 Logger connected</div>
<div class="t" style="left:558.5px;top:683.42px;font-size:11.5px;line-height:14px;letter-spacing:0.438px;">searching for software updates</div>
<div class="a" style="left:827px;top:683px;width:1px;height:17px;background:#a0a0a0"></div>
<div class="a" style="left:828px;top:683px;width:79px;height:1px;background:#dadada"></div>
<div class="t" style="left:841.6px;top:683.62px;font-size:11.5px;line-height:14px;letter-spacing:0.504px;">09:38:21</div>
<div class="a" style="left:909px;top:65px;width:1px;height:638px;background:#5a9ad0"></div>
<div class="a" style="left:766px;top:585px;width:144px;height:21px;background:#ffffe1;box-shadow:0 1px 2px rgba(0,0,0,.22)"></div>
<div class="t" style="left:769.4px;top:589.14px;font-size:12px;line-height:14px;letter-spacing:-0.252px;">Meas channel select for PD</div>
</div></body></html>
